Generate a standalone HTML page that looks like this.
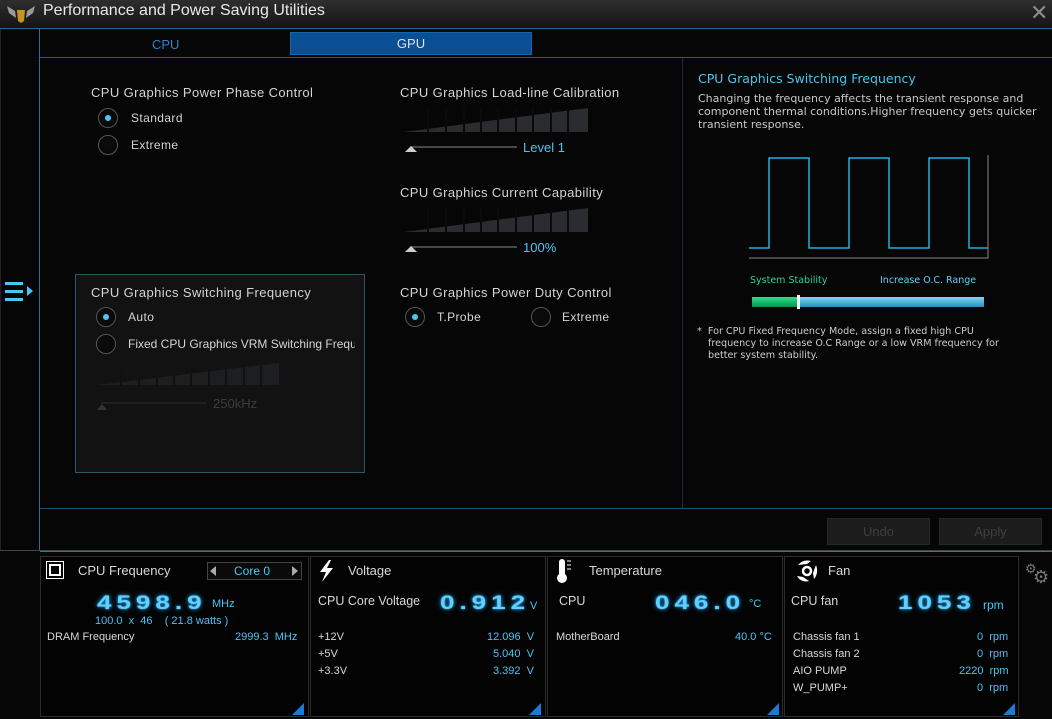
<!DOCTYPE html>
<html><head><meta charset="utf-8"><style>
*{margin:0;padding:0;box-sizing:border-box}
body{width:1052px;height:719px;background:#060606;font-family:"Liberation Sans",sans-serif;color:#d8d8d8;position:relative;overflow:hidden;font-size:12px}
.a{position:absolute}
.title{left:0;top:0;width:1052px;height:28px;background:linear-gradient(#2e2e2e,#141414);}
.hl{height:1px;background:#1c5f80}
.vl{width:1px;background:#1c5f80}
.radio{width:20px;height:20px;border-radius:50%;border:1px solid #555;background:#0b0b0b;box-shadow:inset 0 0 3px #000}
.radio.on::after{content:"";position:absolute;left:6px;top:6px;width:6px;height:6px;border-radius:50%;background:#4cc4f4}
.lbl{font-size:13px;color:#d4d4d4;white-space:nowrap;letter-spacing:0.4px}
.bl{color:#4cc4f4}
.panel{top:556px;height:161px;border:1px solid #2b2b2b;background:#030303}
.corner{width:0;height:0;border-left:12px solid transparent;border-bottom:12px solid #1c7ad0}
.dig{font-family:"Liberation Sans",sans-serif;font-weight:bold;color:#5fd0ff;text-shadow:0 0 6px #1a8fd8,0 0 2px #5fd0ff;letter-spacing:5px;font-size:26px;transform:scaleY(0.75);transform-origin:left top}
.sm{font-size:11px}
.dv{font-family:"DejaVu Sans",sans-serif}
.btn{background:#1c1c1c;border:1px solid #262626;color:#3f3f3f;font-size:13px;text-align:center;line-height:26px}
</style></head><body>
<div class="a title"></div>
<svg class="a" style="left:6px;top:2px" width="30" height="22" viewBox="0 0 30 22"><path d="M1 4 L9 9 L10 16 L3 11Z M29 4 L21 9 L20 16 L27 11Z" fill="#9a9a9a"/><path d="M11 8 L19 8 L18 19 L15 21 L12 19Z" fill="#c89420"/></svg>
<div class="a" style="left:43px;top:2px;font-size:16px;color:#e8e8e8">Performance and Power Saving Utilities</div>
<div class="a" style="left:1030px;top:2px;font-size:22px;color:#8a8a8a;line-height:22px">✕</div>
<div class="a hl" style="left:0;top:28px;width:1052px;background:#1b6b96"></div>
<div class="a vl" style="left:39px;top:29px;height:521px;background:#2a6f9a"></div>
<div class="a" style="left:0;top:29px;width:1px;height:521px;background:#222"></div>
<div class="a" style="left:152px;top:37px;font-size:13px;color:#2a84c8">CPU</div>
<div class="a" style="left:290px;top:32px;width:242px;height:23px;background:#0a4f93;border:1px solid #1566b0;text-align:center;font-size:13px;line-height:22px;color:#e0e0e0">GPU</div>
<div class="a hl" style="left:40px;top:57px;width:1012px"></div>
<div class="a vl" style="left:682px;top:58px;height:450px;background:#1d2a33"></div>
<div class="a hl" style="left:40px;top:508px;width:1012px;background:#17506e"></div>
<div class="a" style="left:5px;top:282px;width:18px;height:3px;background:#4cc4f4"></div>
<div class="a" style="left:5px;top:290px;width:18px;height:3px;background:#4cc4f4"></div>
<div class="a" style="left:5px;top:298px;width:18px;height:3px;background:#4cc4f4"></div>
<div class="a" style="left:27px;top:286px;width:0;height:0;border-left:6px solid #4cc4f4;border-top:5px solid transparent;border-bottom:5px solid transparent"></div>

<div class="a lbl" style="left:91px;top:85px">CPU Graphics Power Phase Control</div>
<div class="a radio on" style="left:98px;top:108px"></div><div class="a lbl" style="left:131px;top:111px;font-size:12px">Standard</div>
<div class="a radio" style="left:98px;top:135px"></div><div class="a lbl" style="left:131px;top:138px;font-size:12px">Extreme</div>

<div class="a" style="left:75px;top:274px;width:290px;height:199px;border:1px solid #2a5766;background:rgba(30,30,30,0.55)"></div>
<div class="a lbl" style="left:91px;top:285px">CPU Graphics Switching Frequency</div>
<div class="a radio on" style="left:96px;top:307px"></div><div class="a lbl" style="left:128px;top:310px;font-size:12px">Auto</div>
<div class="a radio" style="left:96px;top:334px"></div><div class="a lbl" style="left:128px;top:337px;font-size:12px;width:227px;overflow:hidden;letter-spacing:0">Fixed CPU Graphics VRM Switching Frequency</div>
<svg class="a" style="left:97px;top:363px" width="200" height="50"><path d="M0 22 L182 0 L182 22Z" fill="#1d1e20"/><g stroke="#111" stroke-width="2"><line x1="24" y1="0" x2="24" y2="22"/><line x1="42" y1="0" x2="42" y2="22"/><line x1="60" y1="0" x2="60" y2="22"/><line x1="77" y1="0" x2="77" y2="22"/><line x1="94" y1="0" x2="94" y2="22"/><line x1="112" y1="0" x2="112" y2="22"/><line x1="129" y1="0" x2="129" y2="22"/><line x1="147" y1="0" x2="147" y2="22"/><line x1="164" y1="0" x2="164" y2="22"/></g><line x1="4" y1="40" x2="110" y2="40" stroke="#2e2e2e"/><path d="M0 47 L5 41 L10 47Z" fill="#333"/></svg>
<div class="a" style="left:213px;top:396px;font-size:13px;color:#3d3d3d">250kHz</div>

<div class="a lbl" style="left:400px;top:85px">CPU Graphics Load-line Calibration</div>
<svg class="a" style="left:404px;top:108px" width="190" height="50"><path d="M0 24 L184 0 L184 24Z" fill="#2a2c30"/><g stroke="#0a0a0a" stroke-width="2"><line x1="24" y1="0" x2="24" y2="24"/><line x1="42" y1="0" x2="42" y2="24"/><line x1="60" y1="0" x2="60" y2="24"/><line x1="77" y1="0" x2="77" y2="24"/><line x1="94" y1="0" x2="94" y2="24"/><line x1="112" y1="0" x2="112" y2="24"/><line x1="129" y1="0" x2="129" y2="24"/><line x1="147" y1="0" x2="147" y2="24"/><line x1="164" y1="0" x2="164" y2="24"/></g><line x1="6" y1="39" x2="113" y2="39" stroke="#888"/><path d="M1 44 L7 38 L13 44Z" fill="#ccc"/></svg>
<div class="a bl" style="left:523px;top:140px;font-size:13px">Level 1</div>
<div class="a lbl" style="left:400px;top:185px">CPU Graphics Current Capability</div>
<svg class="a" style="left:404px;top:208px" width="190" height="50"><path d="M0 24 L184 0 L184 24Z" fill="#2a2c30"/><g stroke="#0a0a0a" stroke-width="2"><line x1="24" y1="0" x2="24" y2="24"/><line x1="42" y1="0" x2="42" y2="24"/><line x1="60" y1="0" x2="60" y2="24"/><line x1="77" y1="0" x2="77" y2="24"/><line x1="94" y1="0" x2="94" y2="24"/><line x1="112" y1="0" x2="112" y2="24"/><line x1="129" y1="0" x2="129" y2="24"/><line x1="147" y1="0" x2="147" y2="24"/><line x1="164" y1="0" x2="164" y2="24"/></g><line x1="6" y1="39" x2="113" y2="39" stroke="#888"/><path d="M1 44 L7 38 L13 44Z" fill="#ccc"/></svg>
<div class="a bl" style="left:523px;top:240px;font-size:13px">100%</div>
<div class="a lbl" style="left:400px;top:285px">CPU Graphics Power Duty Control</div>
<div class="a radio on" style="left:405px;top:307px"></div><div class="a lbl" style="left:437px;top:310px;font-size:12px">T.Probe</div>
<div class="a radio" style="left:531px;top:307px"></div><div class="a lbl" style="left:562px;top:310px;font-size:12px">Extreme</div>

<div class="a bl dv" style="left:698px;top:71px;font-size:12.5px">CPU Graphics Switching Frequency</div>
<div class="a dv" style="left:698px;top:92px;font-size:11px;color:#c8c8c8;line-height:13px;width:350px">Changing the frequency affects the transient response and component thermal conditions.Higher frequency gets quicker transient response.</div>
<svg class="a" style="left:748px;top:155px" width="245" height="106"><path d="M1 93 L21 93 L21 3 L61 3 L61 93 L101 93 L101 3 L141 3 L141 93 L181 93 L181 3 L221 3 L221 93 L240 93" fill="none" stroke="#1fb0e0" stroke-width="1.5"/><path d="M1 103 L240 103 L240 0" fill="none" stroke="#888"/></svg>
<div class="a dv" style="left:750px;top:275px;font-size:9.5px;color:#2ecf98">System Stability</div>
<div class="a dv" style="left:880px;top:275px;font-size:9.5px;color:#5fd0ff">Increase O.C. Range</div>
<div class="a" style="left:752px;top:297px;width:46px;height:10px;background:linear-gradient(#2fe08a,#0d8f4f)"></div>
<div class="a" style="left:798px;top:297px;width:186px;height:10px;background:linear-gradient(#7fd8f4,#2a8cbc)"></div>
<div class="a" style="left:797px;top:295px;width:3px;height:14px;background:#fff"></div>
<div class="a dv" style="left:697px;top:326px;font-size:9.6px;color:#ccc;line-height:12px;width:322px;padding-left:11px;text-indent:-11px">* &nbsp;For CPU Fixed Frequency Mode, assign a fixed high CPU frequency to increase O.C Range or a low VRM frequency for better system stability.</div>

<div class="a btn" style="left:827px;top:518px;width:103px;height:27px">Undo</div>
<div class="a btn" style="left:939px;top:518px;width:103px;height:27px">Apply</div>

<div class="a hl" style="left:0;top:550px;width:1052px;background:#444"></div>
<div class="a hl" style="left:40px;top:551px;width:1012px;background:#2a7ca8"></div>

<div class="a panel" style="left:40px;width:269px"></div>
<div class="a panel" style="left:310px;width:236px"></div>
<div class="a panel" style="left:547px;width:236px"></div>
<div class="a panel" style="left:784px;width:235px"></div>
<div class="a corner" style="left:292px;top:703px"></div>
<div class="a corner" style="left:529px;top:703px"></div>
<div class="a corner" style="left:767px;top:703px"></div>
<div class="a corner" style="left:1003px;top:703px"></div>

<div class="a" style="left:46px;top:561px;width:18px;height:18px;border:1px solid #fff;padding:2px"><div style="border:2px solid #fff;width:100%;height:100%"></div></div>
<div class="a" style="left:78px;top:563px;font-size:13px">CPU Frequency</div>
<div class="a" style="left:207px;top:562px;width:95px;height:18px;border:1px solid #444;background:#0a0a0a"></div>
<div class="a" style="left:210px;top:566px;width:0;height:0;border-right:6px solid #aaa;border-top:5px solid transparent;border-bottom:5px solid transparent"></div>
<div class="a" style="left:292px;top:566px;width:0;height:0;border-left:6px solid #aaa;border-top:5px solid transparent;border-bottom:5px solid transparent"></div>
<div class="a bl" style="left:234px;top:564px;font-size:12px">Core 0</div>
<div class="a dig" style="left:97px;top:591px">4598.9</div>
<div class="a bl" style="left:212px;top:598px;font-size:11px">MHz</div>
<div class="a bl sm" style="left:95px;top:615px">100.0 &nbsp;x &nbsp;46 &nbsp;&nbsp;&nbsp;( 21.8 watts )</div>
<div class="a sm" style="left:47px;top:631px">DRAM Frequency</div>
<div class="a bl sm" style="left:235px;top:631px">2999.3 &nbsp;MHz</div>

<svg class="a" style="left:316px;top:559px" width="22" height="24"><path d="M13 1 L4 13 L10 13 L6 23 L17 9 L11 9 L15 1Z" fill="#fff"/></svg>
<div class="a" style="left:348px;top:563px;font-size:13px">Voltage</div>
<div class="a" style="left:318px;top:594px;font-size:12.5px">CPU Core Voltage</div>
<div class="a dig" style="left:440px;top:591px;letter-spacing:5px">0.912</div>
<div class="a bl" style="left:530px;top:600px;font-size:11px">V</div>
<div class="a sm" style="left:318px;top:631px">+12V</div><div class="a bl sm" style="left:487px;top:631px">12.096 &nbsp;V</div>
<div class="a sm" style="left:318px;top:648px">+5V</div><div class="a bl sm" style="left:493px;top:648px">5.040 &nbsp;V</div>
<div class="a sm" style="left:318px;top:665px">+3.3V</div><div class="a bl sm" style="left:493px;top:665px">3.392 &nbsp;V</div>

<svg class="a" style="left:556px;top:558px" width="18" height="26"><rect x="3" y="1" width="6" height="17" rx="3" fill="#fff"/><circle cx="6" cy="20" r="5" fill="#fff"/><g stroke="#fff"><line x1="11" y1="3" x2="15" y2="3"/><line x1="11" y1="7" x2="15" y2="7"/><line x1="11" y1="11" x2="15" y2="11"/></g></svg>
<div class="a" style="left:589px;top:563px;font-size:13px">Temperature</div>
<div class="a" style="left:559px;top:594px;font-size:12.5px">CPU</div>
<div class="a dig" style="left:655px;top:591px">046.0</div>
<div class="a bl" style="left:749px;top:598px;font-size:11px">°C</div>
<div class="a sm" style="left:556px;top:631px">MotherBoard</div><div class="a bl sm" style="left:735px;top:631px">40.0 °C</div>

<svg class="a" style="left:795px;top:559px" width="24" height="24"><circle cx="12" cy="12" r="4" fill="none" stroke="#fff" stroke-width="2.5"/><path d="M3 6 Q8 0 16 2 L12 5Z M21 6 Q24 14 19 20 L18 14Z M14 22 Q6 24 2 17 L8 18Z" fill="#fff"/></svg>
<div class="a" style="left:828px;top:563px;font-size:13px">Fan</div>
<div class="a" style="left:791px;top:594px;font-size:12.5px">CPU fan</div>
<div class="a dig" style="left:898px;top:591px">1053</div>
<div class="a bl" style="left:983px;top:598px;font-size:12px">rpm</div>
<div class="a sm" style="left:793px;top:631px">Chassis fan 1</div><div class="a bl sm" style="left:977px;top:631px">0 &nbsp;rpm</div>
<div class="a sm" style="left:793px;top:648px">Chassis fan 2</div><div class="a bl sm" style="left:977px;top:648px">0 &nbsp;rpm</div>
<div class="a sm" style="left:793px;top:665px">AIO PUMP</div><div class="a bl sm" style="left:959px;top:665px">2220 &nbsp;rpm</div>
<div class="a sm" style="left:793px;top:682px">W_PUMP+</div><div class="a bl sm" style="left:977px;top:682px">0 &nbsp;rpm</div>

<div class="a" style="left:1025px;top:561px;font-size:13px;color:#777">⚙</div>
<div class="a" style="left:1033px;top:567px;font-size:18px;color:#777">⚙</div>
</body></html>
